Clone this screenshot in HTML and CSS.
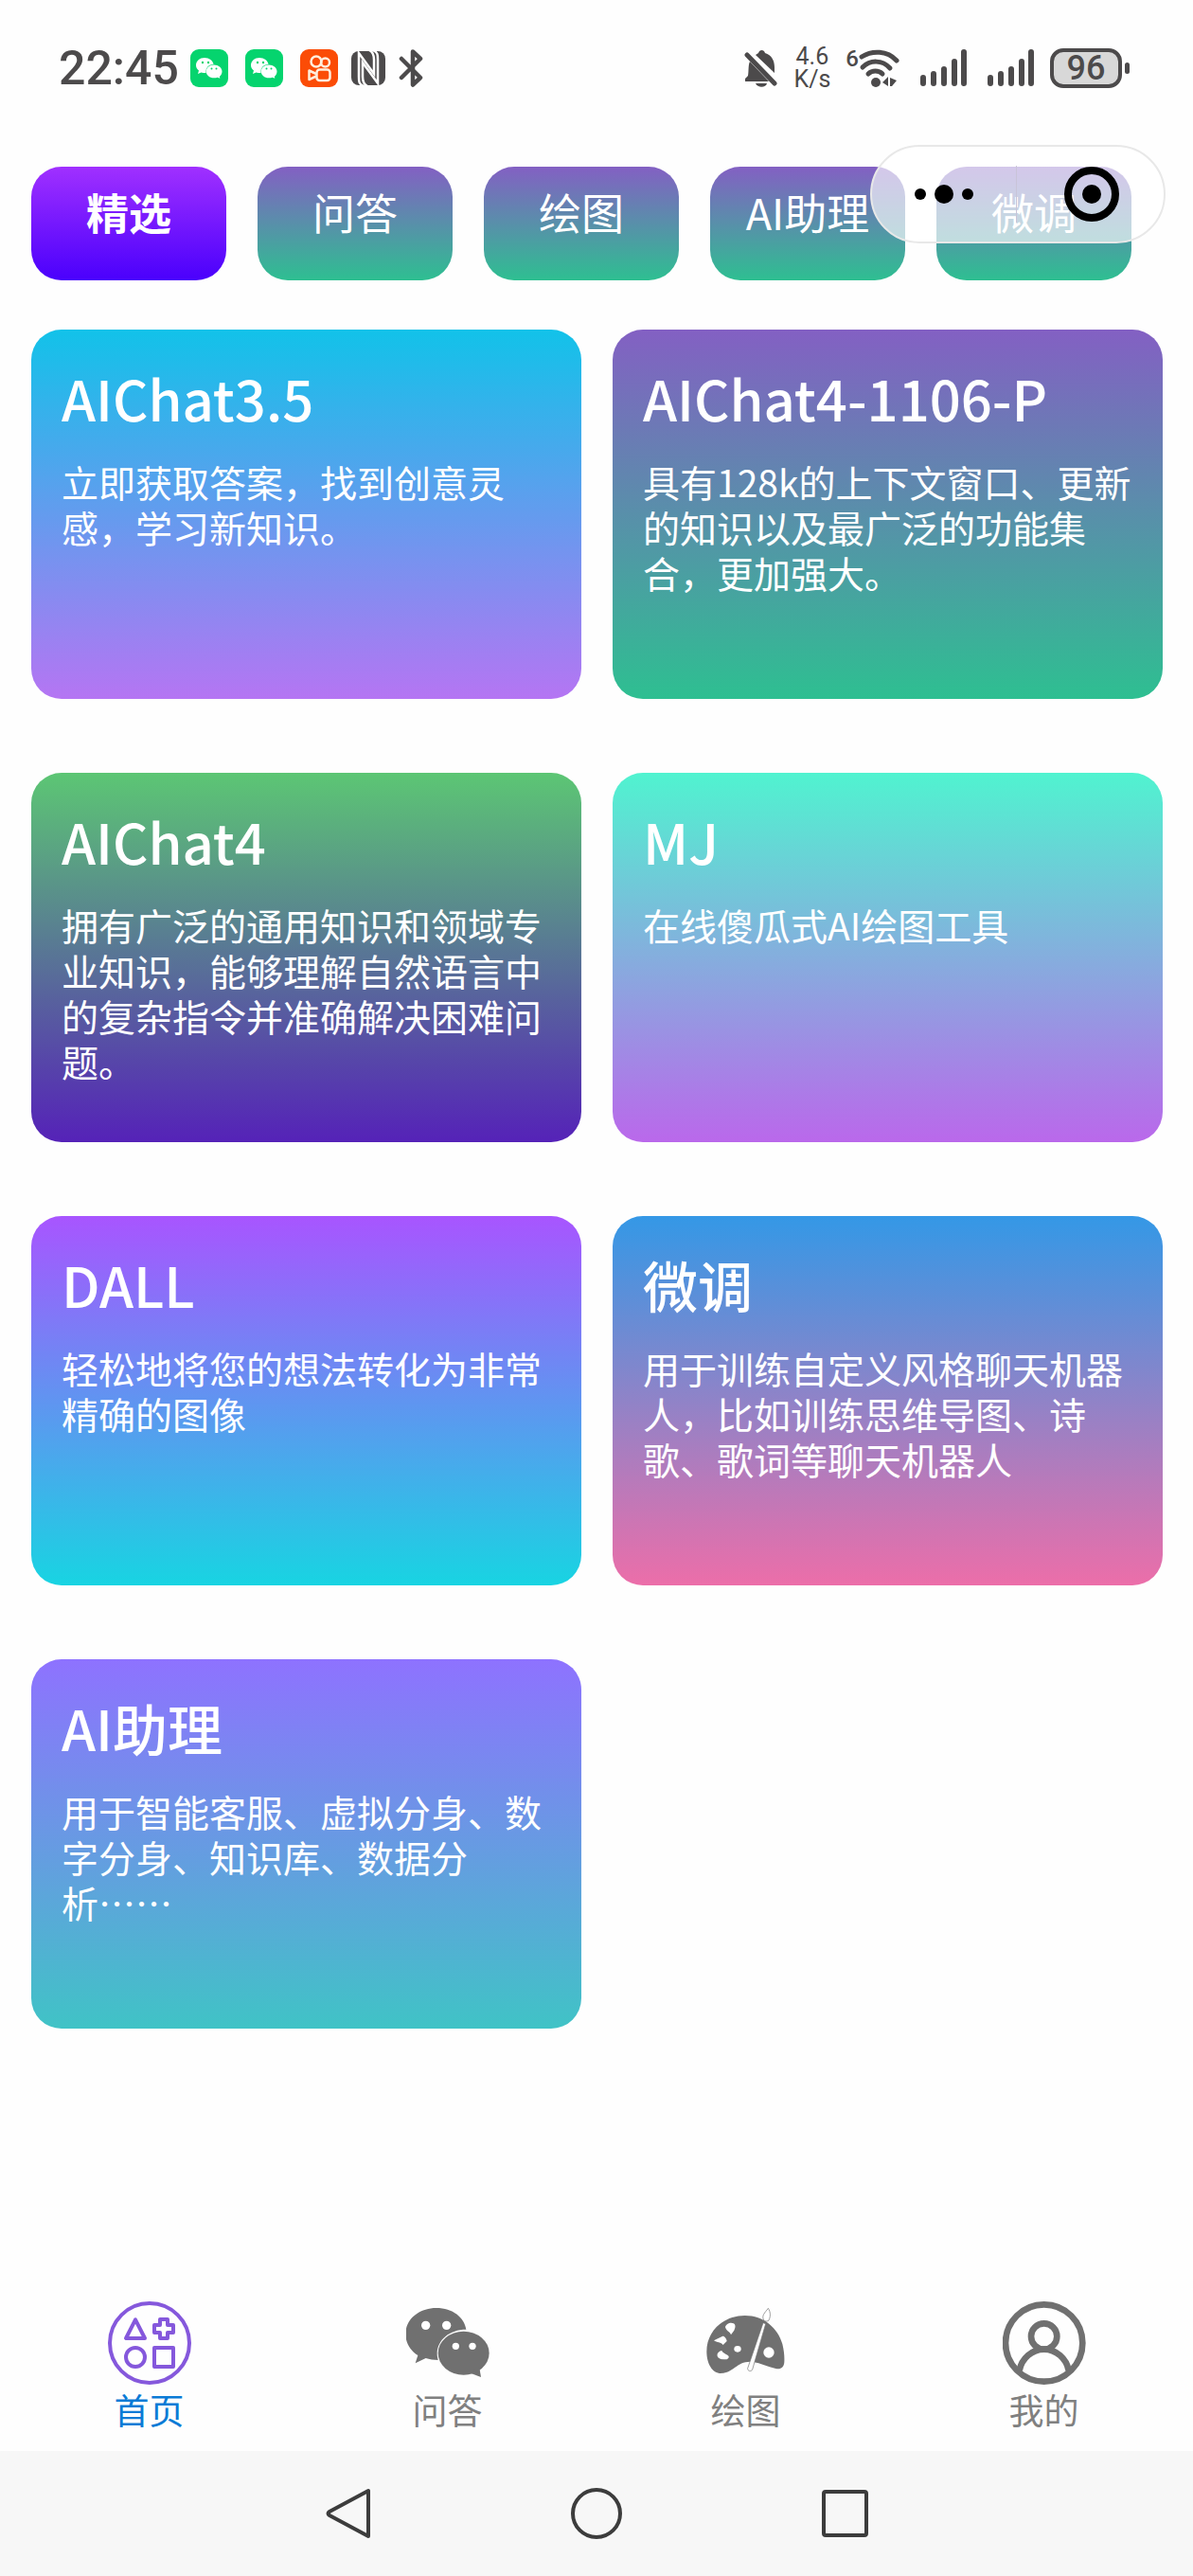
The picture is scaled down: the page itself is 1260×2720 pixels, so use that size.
FILE: index.html
```html
<!DOCTYPE html>
<html lang="zh-CN">
<head>
    <meta charset="UTF-8">
    <meta name="viewport" content="width=device-width, initial-scale=1.0">
    <title>AIChat</title>
    <link rel="stylesheet" href="styles.css">
</head>
<body>

    <!-- Shared icon shapes -->
    <svg class="defs" width="0" height="0" aria-hidden="true">
        <symbol id="wechat" viewBox="1105 90 264 264">
            <path fill="currentColor" d="M1200 111c53 0 89 30 95 68-52 0-91 32-92 76 0 8 1 14 3 21-14 0-27-2-39-6l-33 16 8-25c-24-15-39-39-39-68 0-46 43-82 97-82z"/>
            <ellipse fill="currentColor" cx="1287" cy="254" rx="81" ry="69"/>
            <path fill="currentColor" d="M1310 318l32 12-6-35z"/>
            <g fill="#fff">
                <circle cx="1167" cy="166" r="14"/>
                <circle cx="1233" cy="166" r="14"/>
                <circle cx="1262" cy="232" r="11"/>
                <circle cx="1315" cy="232" r="11"/>
            </g>
        </symbol>
        <symbol id="wechat-app" viewBox="0 0 40 40">
            <rect width="40" height="40" rx="9" fill="#05d46e"/>
            <path fill="#fff" d="M15 9c5 0 9 3 9.500 7-4.500 0-8 3-8 7.500v1.500c-2 0-3.500 0-5-.5L8 26l1-3.500C7 21 6 19 6 17c0-4.500 4-8 9-8z"/>
            <path fill="#fff" d="M25 16.500c4.700 0 8.500 3 8.500 7 0 2-1 4-2.600 5.200l.4 2-2.500-1c-1.200.5-2.500.6-3.800.6-4.700 0-8.200-3-8.200-6.800s3.500-7 8.200-7z"/>
            <g fill="#05d46e">
                <circle cx="13" cy="14" r="1.200"/>
                <circle cx="19" cy="14" r="1.200"/>
                <circle cx="22.500" cy="20.500" r="1"/>
                <circle cx="27.500" cy="20.500" r="1"/>
            </g>
        </symbol>
        <symbol id="signal" viewBox="0 0 50 40">
            <path fill="none" stroke="currentColor" stroke-width="6" stroke-linecap="round" d="M3 30v6M14 26v10M25 21v15M36 13v23M46 3v33"/>
        </symbol>
    </svg>

    <header class="status-bar">
        <div class="status-left">
            <span class="time">22:45</span>
            <svg class="app-icon"><use href="#wechat-app"/></svg>
            <svg class="app-icon"><use href="#wechat-app"/></svg>
            <svg class="app-icon" viewBox="0 0 40 40">
                <rect width="40" height="40" rx="9" fill="#fb4c06"/>
                <g fill="none" stroke="#ffeedd" stroke-width="2.500">
                    <circle cx="17" cy="13" r="5.500"/>
                    <circle cx="26.500" cy="14" r="4.500"/>
                    <rect x="17.500" y="21.500" width="14" height="11.500" rx="3"/>
                    <path stroke-linejoin="round" d="M17 26l-7.500-3.500v9.500l7.500-3.500"/>
                </g>
            </svg>
            <svg class="small-icon" viewBox="0 0 36 40">
                <rect y="2" width="36" height="36" rx="8" fill="currentColor"/>
                <path fill="none" stroke="#fff" stroke-width="2.500" d="M13 39C8 37 8 34 8 29V4l16 22V11c0-5-1-8-5-10"/>
                <path fill="none" stroke="#fff" stroke-width="2.500" d="M23 1c5 2 5 5 5 10v25L12 14v15c0 5 1 8 5 10"/>
            </svg>
            <svg class="small-icon bluetooth" viewBox="0 0 26 40">
                <path fill="none" stroke="currentColor" stroke-width="4.500" stroke-linecap="round" stroke-linejoin="round" d="M3 10l20 20-8 7.500V2.500L23 10 3 30"/>
            </svg>
        </div>

        <div class="status-right">
            <svg class="bell" viewBox="0 0 36 40">
                <path fill="currentColor" d="M6 13l20 21H1v-3l3-3c1-5 0-11 2-15zM12 6l3-2c1-4 6-4 7 0 7 2 10 8 10 15v6z"/>
                <path fill="none" stroke="currentColor" stroke-width="5" stroke-linecap="round" d="M3 6l29 30"/>
                <path fill="currentColor" d="M12 36h12c-1 5-10 5-12 0z"/>
            </svg>
            <div class="speed">
                <span>4.6</span>
                <span>K/s</span>
            </div>
            <span class="wifi">
                <span class="wifi-gen">6</span>
                <svg viewBox="0 0 44 40">
                    <g fill="none" stroke="currentColor" stroke-width="5" stroke-linecap="round">
                        <path d="M3 8c11-7 27-7 37 4"/>
                        <path d="M4 19c8-8 21-8 29 1"/>
                        <path d="M10 26c4-4 11-4 15 0"/>
                    </g>
                    <circle cx="18" cy="35" r="5" fill="currentColor"/>
                    <path fill="currentColor" d="M31 29v10l-6-4zM33 30l7 3-5 6h-2z"/>
                </svg>
            </span>
            <svg class="signal"><use href="#signal"/></svg>
            <svg class="signal"><use href="#signal"/></svg>
            <span class="battery"><span class="battery-level">96</span></span>
        </div>
    </header>

    <nav class="tabs">
        <button class="tab active">精选</button>
        <button class="tab">问答</button>
        <button class="tab">绘图</button>
        <button class="tab">AI助理</button>
        <button class="tab">微调</button>
    </nav>

    <!-- Mini program capsule, floats over the tabs -->
    <div class="capsule">
        <button class="capsule-btn" aria-label="更多">
            <svg width="64" height="64" viewBox="0 0 64 64">
                <circle cx="7" cy="32" r="6"/>
                <circle cx="32" cy="32" r="10"/>
                <circle cx="57" cy="32" r="6"/>
            </svg>
        </button>
        <button class="capsule-btn close" aria-label="关闭">
            <svg width="64" height="64" viewBox="0 0 64 64">
                <circle cx="32" cy="32" r="25" fill="none" stroke="#000" stroke-width="8"/>
                <circle cx="32" cy="32" r="10"/>
            </svg>
        </button>
    </div>

    <main class="cards">
        <a class="card sky" href="#">
            <h2>AIChat3.5</h2>
            <p>立即获取答案，找到创意灵感，学习新知识。</p>
        </a>
        <a class="card forest" href="#">
            <h2>AIChat4-1106-P</h2>
            <p>具有128k的上下文窗口、更新的知识以及最广泛的功能集合，更加强大。</p>
        </a>
        <a class="card night" href="#">
            <h2>AIChat4</h2>
            <p>拥有广泛的通用知识和领域专业知识，能够理解自然语言中的复杂指令并准确解决困难问题。</p>
        </a>
        <a class="card mint" href="#">
            <h2>MJ</h2>
            <p>在线傻瓜式AI绘图工具</p>
        </a>
        <a class="card violet" href="#">
            <h2>DALL</h2>
            <p>轻松地将您的想法转化为非常精确的图像</p>
        </a>
        <a class="card rose" href="#">
            <h2>微调</h2>
            <p>用于训练自定义风格聊天机器人，比如训练思维导图、诗歌、歌词等聊天机器人</p>
        </a>
        <a class="card teal" href="#">
            <h2>AI助理</h2>
            <p>用于智能客服、虚拟分身、数字分身、知识库、数据分析……</p>
        </a>
    </main>

    <footer>
        <nav class="tab-bar">
            <a class="tab-item current" href="#">
                <svg viewBox="159 90 264 264" fill="none" stroke="#8558dc" stroke-width="12" stroke-linejoin="round">
                    <circle cx="291" cy="222" r="126"/>
                    <path d="M246 148l-30 59h60z"/>
                    <path d="M324 147h24v18h18v24h-18v18h-24v-18h-18v-24h18z"/>
                    <circle cx="246" cy="267" r="30"/>
                    <path d="M306 237h60v60h-60z"/>
                </svg>
                <span>首页</span>
            </a>
            <a class="tab-item" href="#">
                <svg><use href="#wechat"/></svg>
                <span>问答</span>
            </a>
            <a class="tab-item" href="#">
                <svg viewBox="190 90 264 264">
                    <path fill="currentColor" d="M318 135c60 0 105 40 119 90 5 20 7 40 6 58-1 16-12 24-27 20-26-6-48-17-72-21-50-6-62 36-101 36-29 0-46-32-46-69 0-66 55-114 121-114z"/>
                    <g fill="#fff">
                        <path d="M256 172c2-10 16-17 26-12 8 4 6 14 2 22l-10 14c-2-10-14-10-18-24z"/>
                        <path d="M220 214l28-14c6 0 12 8 13 16l-12 12c-6-8-20-8-29-14z"/>
                        <path d="M231 263c-2-8 6-16 14-17 2 8 18 12 22 18 1 6-4 10-10 10-10 0-24-2-26-11z"/>
                        <ellipse cx="295" cy="241" rx="11" ry="10"/>
                        <circle cx="394" cy="252" r="17"/>
                    </g>
                    <path fill="#fff" stroke="currentColor" stroke-width="2" d="M376 158l8 3-42 145c-4 8-16 5-15-4z"/>
                    <path fill="#fff" stroke="currentColor" stroke-width="2" d="M378 150c-8-16 4-24 14-38 8 12 8 26 2 38-4 4-10 4-16 0z"/>
                </svg>
                <span>绘图</span>
            </a>
            <a class="tab-item" href="#">
                <svg viewBox="1135 90 264 264" fill="none" stroke="currentColor" stroke-width="20">
                    <circle cx="1266" cy="222" r="122"/>
                    <circle cx="1266" cy="201" r="41"/>
                    <path d="M1188 309c7-38 40-67 78-67s71 29 78 67"/>
                </svg>
                <span>我的</span>
            </a>
        </nav>

        <!-- Android navigation -->
        <div class="system-nav">
            <button aria-label="返回">
                <svg viewBox="0 0 54 54"><path d="M48 3v48L7 29q-3-2 0-4z"/></svg>
            </button>
            <button aria-label="主屏幕">
                <svg viewBox="0 0 54 54"><circle cx="27" cy="27" r="25"/></svg>
            </button>
            <button aria-label="最近任务">
                <svg viewBox="0 0 54 54"><rect x="5" y="4" width="45" height="46" rx="2"/></svg>
            </button>
        </div>
    </footer>

</body>
</html>
```
FILE: styles.css
```css
* {
    box-sizing: border-box;
}

body {
    display: flex;
    flex-direction: column;
    min-height: 100vh;
    margin: 0;
    background-color: #fefefe;
    font-family: "Noto Sans CJK SC", sans-serif;
}

button {
    padding: 0;
    border: none;
    background: none;
    font-family: inherit;
    cursor: pointer;
}

a {
    color: inherit;
    text-decoration: none;
}

.defs {
    position: absolute;
}

/* Status bar */
.status-bar {
    display: flex;
    justify-content: space-between;
    align-items: center;
    height: 144px;
    padding: 0 75px 0 62px;
    color: #4c4a4b;
    font-family: Roboto, sans-serif;
}

.status-left,
.status-right {
    display: flex;
    align-items: center;
}

.time {
    margin-right: 12px;
    font-size: 50px;
    font-weight: 500;
}

.app-icon {
    width: 40px;
    height: 40px;
    margin-right: 18px;
}

.small-icon {
    width: 36px;
    height: 40px;
    margin-left: -4px;
}

.bluetooth {
    width: 26px;
    margin-left: 14px;
}

.bell {
    width: 36px;
    height: 40px;
}

.speed {
    display: flex;
    flex-direction: column;
    margin-left: 16px;
    font-size: 25px;
    line-height: 24px;
    text-align: center;
}

.wifi {
    display: flex;
    margin-left: 16px;
}

.wifi-gen {
    font-size: 24px;
    font-weight: 500;
    line-height: 20px;
}

.wifi svg {
    width: 44px;
    height: 40px;
}

.signal {
    width: 50px;
    height: 40px;
    margin-left: 21px;
}

.battery {
    position: relative;
    margin-left: 16px;
}

.battery-level {
    display: block;
    width: 76px;
    border: 4px solid #4c4a4b;
    border-radius: 14px;
    background-color: #d8d8d8;
    font-size: 36px;
    font-weight: 500;
    line-height: 34px;
    text-align: center;
}

.battery::after {
    content: "";
    position: absolute;
    top: 15px;
    right: -8px;
    width: 5px;
    height: 12px;
    border-radius: 3px;
    background-color: #4c4a4b;
}

/* Category tabs */
.tabs {
    display: grid;
    grid-template-columns: repeat(5, 1fr);
    gap: 33px;
    margin-top: 32px;
    padding: 0 65px 0 33px;
}

.tab {
    height: 120px;
    padding-bottom: 26px;
    border-radius: 32px;
    background: linear-gradient(#8360c3, #2ebf91);
    color: #fff;
    font-size: 45px;
}

.tab.active {
    background: linear-gradient(#a030ff, #4a00fc);
    font-weight: bold;
}

/* Capsule */
.capsule {
    position: absolute;
    top: 153px;
    right: 29px;
    display: flex;
    width: 312px;
    height: 104px;
    border: 2px solid #e8e8e8;
    border-radius: 52px;
    background-color: rgba(255, 255, 255, 0.65);
}

.capsule-btn {
    display: flex;
    flex: 1;
    align-items: center;
    justify-content: center;
}

.capsule-btn.close {
    padding-left: 4px;
    background: linear-gradient(#c9c4d8, #c9c4d8) no-repeat left center / 1px 60px;
}

/* Cards */
.cards {
    display: grid;
    grid-template-columns: repeat(2, 1fr);
    gap: 78px 33px;
    padding: 52px 32px 52px 33px;
}

.card {
    min-height: 390px;
    padding: 32px 24px 32px 32px;
    border-radius: 32px;
    color: #fff;
}

.card h2 {
    margin: 0 0 24px;
    font-size: 58px;
    font-weight: 500;
    line-height: 80px;
}

.card p {
    margin: 0;
    font-size: 39px;
    line-height: 48px;
}

.sky { background: linear-gradient(#12c2e9, #b575f3); }
.forest { background: linear-gradient(#8360c3, #2ebf91); }
.night { background: linear-gradient(#5cc674, #5522b8); }
.mint { background: linear-gradient(#50f3d0, #ba68eb); }
.violet { background: linear-gradient(#a855ff, #18d4e2); }
.rose { background: linear-gradient(#3498e6, #ec6ea9); }
.teal { background: linear-gradient(#8e72ff, #40c3c6); }

/* Bottom tab bar */
footer {
    margin-top: auto;
}

.tab-bar {
    display: grid;
    grid-template-columns: repeat(4, 1fr);
    padding-bottom: 18px;
}

.tab-item {
    display: flex;
    flex-direction: column;
    align-items: center;
    color: #707070;
    font-size: 37px;
    line-height: 52px;
}

.tab-item svg {
    width: 88px;
    height: 88px;
}

.tab-item span {
    color: #808080;
}

.tab-item.current span {
    color: #0a7bd6;
}

.system-nav {
    display: flex;
    justify-content: center;
    gap: 208px;
    height: 132px;
    background-color: #f7f7f7;
}

.system-nav svg {
    display: block;
    width: 54px;
    height: 54px;
    fill: none;
    stroke: #3c3c3c;
    stroke-width: 4;
    stroke-linejoin: round;
}
```
